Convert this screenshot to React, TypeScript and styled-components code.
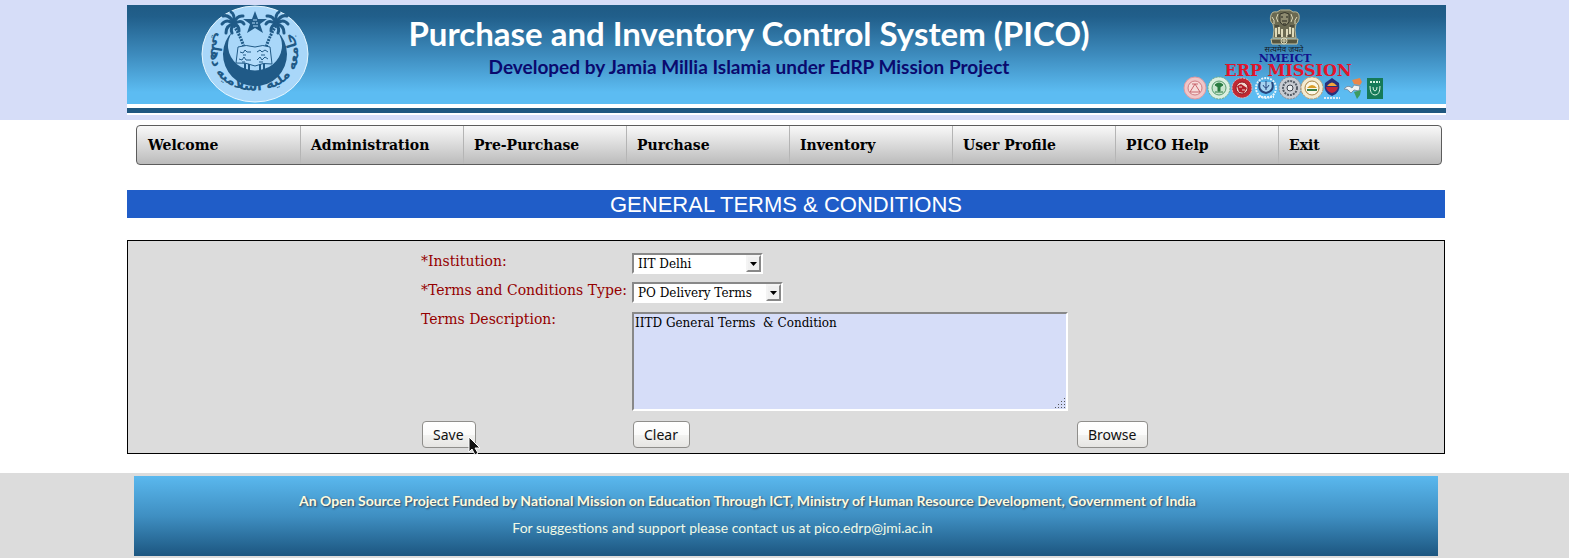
import React from "react";
import styled, { createGlobalStyle } from "styled-components";

const serif = `"DejaVu Serif", "Liberation Serif", serif`;
const banner = `Lato, "Open Sans", sans-serif`;

const GlobalStyle = createGlobalStyle`
  *, *::before, *::after { box-sizing: border-box; }
  body { margin: 0; background: #fff; font-family: ${serif}; color: #000; }
  h1, h2, p, ul { margin: 0; padding: 0; }
`;

const HeaderBand = styled.header`
  padding: 5px 123px 5px 127px;
  background: #d6ddf8;
`;

const Banner = styled.div`
  display: flex;
  align-items: flex-start;
  height: 99px;
  padding: 0 61px 0 74px;
  background: linear-gradient(#1f5a85 0%, #215f8b 12%, #3d8bbd 50%, #5cbcf2 88%, #5cbcf2 100%);
`;

const BannerRule = styled.div`
  height: 11px;
  border: solid #fff;
  border-width: 4px 0 2px;
  background: #1f5880;
`;

const BannerText = styled.div`
  flex: 1;
  padding: 8px 0 0 6px;
  text-align: center;
  font-family: ${banner};
  font-weight: 700;
  white-space: nowrap;
`;

const SystemName = styled.h1`
  font-size: 33px;
  line-height: 40px;
  color: #fff;
`;

const Developer = styled.p`
  font-size: 19px;
  line-height: 28px;
  color: #0a0a6e;
`;

const Content = styled.main`
  padding: 5px 124px 19px 127px;
`;

const MenuBar = styled.nav`
  margin: 0 3px 0 9px;
  border: 1px solid #5c5c5c;
  border-radius: 4px;
  background: linear-gradient(#f9f9f9, #bbb);
  overflow: hidden;
`;

const MenuList = styled.ul`
  display: grid;
  grid-template-columns: repeat(8, 1fr);
  list-style: none;
`;

const MenuItem = styled.li`
  border-left: 1px solid transparent;

  & + & {
    border-image: linear-gradient(#b4b4b4, #b4b4b4 70%, #bbb) 1;
  }
`;

const MenuLink = styled.a`
  display: block;
  padding: 0 10px;
  font-size: 14px;
  font-weight: 700;
  line-height: 38px;
  color: #000;
  text-decoration: none;
  white-space: nowrap;
`;

const PageTitle = styled.h2`
  margin: 25px 0 22px;
  padding-top: 1px;
  background: #205dc8;
  color: #fff;
  font: 400 22px/27px "Liberation Sans", Arial, sans-serif;
  text-align: center;
`;

const TermsForm = styled.form`
  display: grid;
  grid-template-columns: 211px 444px 73px;
  justify-content: center;
  row-gap: 8px;
  padding: 12px 2px 5px 0;
  border: 1px solid #000;
  background: #dcdcdc;
`;

const Label = styled.label`
  grid-column: 1;
  font-size: 14px;
  line-height: 16px;
  color: #950000;
  white-space: nowrap;
`;

const SelectBox = styled.div<{ $width: number }>`
  position: relative;
  grid-column: 2;
  width: ${(p) => p.$width}px;
  height: 21px;
`;

const Select = styled.select`
  appearance: none;
  display: block;
  width: 100%;
  height: 21px;
  padding: 1px 20px 0 4px;
  border: 2px solid;
  border-color: #888 #fff #fff #888;
  border-radius: 0;
  background: #fff;
  color: #000;
  font: 12px/16px ${serif};
`;

const ArrowBox = styled.span`
  position: absolute;
  top: 2px;
  right: 2px;
  display: flex;
  align-items: center;
  justify-content: center;
  width: 15px;
  height: 17px;
  border: 2px solid;
  border-color: #f4f4f4 #888 #888 #f4f4f4;
  background: #f0f0f0;
  pointer-events: none;
`;

const AreaBox = styled.div`
  position: relative;
  grid-column: 2;
  width: 436px;
  padding-top: 1px;
`;

const TextArea = styled.textarea`
  display: block;
  width: 100%;
  height: 99px;
  padding: 1px;
  border: 2px solid;
  border-color: #888 #fff #fff #888;
  border-radius: 0;
  background: #d6ddf8;
  color: #000;
  font: 12px/16px ${serif};
  resize: none;
`;

const Grip = styled.svg`
  position: absolute;
  right: 2px;
  bottom: 2px;
  pointer-events: none;
`;

const ButtonCell = styled.div<{ $column: number }>`
  position: relative;
  grid-column: ${(p) => p.$column};
  justify-self: start;
  padding: 2px 1px 0;
`;

const Button = styled.button`
  height: 27px;
  padding: 0 11px 0 10px;
  border: 1px solid #8f8e8b;
  border-radius: 4px;
  background: linear-gradient(#fff, #fbfbfa 50%, #f3f3f1 51%, #e6e5e3);
  color: #111;
  font: 14px/24px "Noto Sans", "Open Sans", sans-serif;
`;

const Pointer = styled.svg`
  position: absolute;
  left: 47px;
  top: 17px;
`;

const FooterBand = styled.footer`
  padding: 3px 131px 2px 134px;
  background: #dcdcdc;
`;

const FooterPanel = styled.div`
  height: 80px;
  padding: 11px 77px 0 0;
  background: linear-gradient(#5ab8ee, #3f8fc2 50%, #1c5680);
  font-family: ${banner};
  text-align: center;
  white-space: nowrap;
`;

const Funding = styled.p`
  font-size: 14px;
  font-weight: 700;
  line-height: 27px;
  color: #fdfbe0;
  text-shadow: 1px 1px 2px #333c50;
`;

const Support = styled.p`
  padding-right: 50px;
  font-size: 14px;
  line-height: 27px;
  color: #f1fae6;
`;

const Palm = ({ flip }: { flip?: boolean }) => (
  <g transform={flip ? "translate(108 0) scale(-1 1)" : undefined} fill="none" stroke="#205a87">
    <path d="M33 21 Q39 30 43 42" strokeWidth="3" strokeDasharray="2 1" />
    <g strokeWidth="3" strokeLinecap="round">
      <path d="M33 19 Q26 13 21 19" />
      <path d="M33 19 Q25 20 25 28" />
      <path d="M33 18 Q28 9 22 11" />
      <path d="M33 18 Q34 9 30 7" />
      <path d="M33 18 Q36 10 42 11" />
      <path d="M33 19 Q40 14 43 19" />
      <path d="M33 19 Q38 20 38 26" />
      <path d="M33 19 Q29 23 31 28" />
    </g>
  </g>
);

const JamiaEmblem = () => (
  <svg width="108" height="98" viewBox="0 0 108 98" role="img" aria-label="Jamia Millia Islamia emblem">
    <ellipse cx="54" cy="49" rx="53" ry="48" fill="#a9d7f9" stroke="#e6f7ff" strokeWidth="1" />
    <path d="M32 26 A32 32 0 1 0 76 26 A27 25 0 1 1 32 26 Z" fill="#205a87" />
    <Palm />
    <Palm flip />
    <path d="M54 6 L57 14 L66 14 L59 19 L62 28 L54 23 L46 28 L49 19 L42 14 L51 14 Z" fill="#205a87" />
    <path d="M52 15 h4 M51 18 h3 M55 18 h2 M52 21 h5" stroke="#b3dcfb" />
    <path d="M44 58 v11 M48 58 v11 M59 58 v11 M63 58 v11" stroke="#205a87" strokeWidth="2" />
    <path
      d="M37 42 Q45 39 54 42 Q62 39 69 42 L71 59 Q62 57 54 61 Q45 57 35 58 Z"
      fill="#b3dcfb"
      stroke="#205a87"
      strokeWidth="1"
    />
    <path
      d="M39 47 l3 1 l2 -3 l2 2 l4 0 M56 47 l3 -2 l2 2 l3 -2 l3 2 M42 50 h3 M60 50 h4 M38 54 l3 1 l2 -3 l2 3 l5 0 M56 55 l3 -3 l2 3 l3 -3 l3 2 M41 57 h3 M58 57 h4"
      stroke="#205a87"
      fill="none"
      strokeWidth="1"
    />
    <path id="emblem-baseline" d="M16 28 C7 44 8 60 19 72 C36 90 72 90 88 72 C99 60 100 44 91 28" fill="none" />
    <text fontFamily="DejaVu Sans, sans-serif" fontSize="14" fontWeight="700" fill="#205a87" textAnchor="middle">
      <textPath href="#emblem-baseline" startOffset="50%">
        جامعه مليه اسلاميه دهلي
      </textPath>
    </text>
  </svg>
);

const MissionMark = () => (
  <svg width="202" height="98" viewBox="0 0 202 98" role="img" aria-label="NMEICT ERP Mission">
    <path
      d="M88 10 Q89 6 94 7 Q97 4 102 5 Q108 4 110 7 Q115 6 116 10 Q117 16 113 19 L112 25 L113 33 H90 L91 25 L90 19 Q86 16 88 10 Z"
      fill="#6b6a52"
      stroke="#b9b798"
    />
    <path d="M88 34 H115 L114 39 H89 Z" fill="#55553f" stroke="#c9c6a4" />
    <g fill="none" stroke="#dedabb" strokeWidth="1">
      <path d="M89 12 q3 3 2 7 M114 12 q-3 3 -2 7 M95 9 q-3 4 0 8 M108 9 q3 4 0 8" />
      <path d="M93 23 v9 M96 22 v7 M99 24 v8 M104 24 v8 M107 22 v7 M110 23 v9" strokeWidth="2" />
      <circle cx="101" cy="36" r="3" />
      <path d="M101 34 v4 M99 36 h4" />
    </g>
    <path d="M97 9 q5 -3 9 0 v8 q-4 7 -9 0 Z" fill="#8e8b70" stroke="#34342a" />
    <path d="M98 12 h2 M103 12 h2 M99 16 h5 M100 19 h3" stroke="#22221a" />
    <path d="M94 31 h4 M104 31 h4 M92 21 h4 M107 21 h4" stroke="#30302a" />
    <text x="101" y="47" fontFamily="Noto Sans, sans-serif" fontSize="8" textAnchor="middle" fill="#141c28">
      सत्यमेव जयते
    </text>
    <g fontFamily="DejaVu Serif, serif" fontWeight="700" textAnchor="middle">
      <text x="102" y="57" fontSize="11" fill="#12128c">NMEICT</text>
      <text x="105" y="71" fontSize="16" fill="#e3142a">ERP MISSION</text>
    </g>
    <g strokeWidth="1">
      <circle cx="12" cy="83" r="11" fill="#f0c6c8" stroke="#e0999f" />
      <circle cx="12" cy="83" r="7" fill="#f6dcda" stroke="#cf7d84" />
      <path d="M7 87 l5 -8 l5 8 Z M9 79 h6" fill="none" stroke="#c8646c" />
      <circle cx="36" cy="83" r="11" fill="#dcefe0" stroke="#6dab84" strokeDasharray="2 1" />
      <circle cx="36" cy="83" r="7" fill="#c9e6cf" stroke="#559a6c" />
      <path d="M32 80 q4 -4 8 0 l-3 2 v4 h-2 v-4 Z M32 87 h8" fill="#287a40" stroke="#287a40" />
      <circle cx="59" cy="83" r="10" fill="#c22832" stroke="#ebb4b0" strokeDasharray="2 1" />
      <circle cx="59" cy="83" r="6" fill="#f3d8d0" stroke="#8c1620" />
      <path d="M54 81 l4 -2 l6 4 l-3 5 l-5 -1 Z" fill="#b31e28" />
      <path d="M56 82 h3 M59 85 h3" stroke="#f3d8d0" />
      <circle cx="83" cy="83" r="10" fill="none" stroke="#e6f3fa" strokeWidth="2" strokeDasharray="2 1" />
      <path d="M77 77 q-3 9 6 11 q9 -2 6 -11" fill="#a6d3f0" stroke="#27457c" strokeWidth="2" />
      <path d="M83 76 v9 M80 80 q3 6 6 0" fill="none" stroke="#27457c" />
      <path d="M75 92 h16" stroke="#e6f3fa" strokeWidth="2" strokeDasharray="2 1" />
      <circle cx="107" cy="83" r="11" fill="#c9ccd2" stroke="#868a92" strokeDasharray="2 1" />
      <circle cx="107" cy="83" r="7" fill="none" stroke="#555c66" strokeWidth="2" strokeDasharray="2 1" />
      <circle cx="107" cy="83" r="3" fill="#eceef0" stroke="#3c424c" />
      <circle cx="129" cy="83" r="11" fill="#f3ead0" stroke="#b39a72" strokeDasharray="3 1" />
      <circle cx="129" cy="83" r="7" fill="#fbf7e6" stroke="#a87f3c" />
      <path d="M124 83 q5 -6 10 0 Z" fill="#d99d28" />
      <path d="M124 85 h10" stroke="#3b8048" strokeWidth="2" />
      <path d="M149 73 L156 78 Q158 88 149 91 Q140 88 142 78 Z" fill="#28307c" />
      <path d="M144 81 q5 -7 10 0 Z" fill="#f4a63c" />
      <path d="M143 82 h12 q-1 5 -6 6 q-5 -1 -6 -6 Z" fill="#c22438" />
      <path d="M141 93 h16" stroke="#dceaf4" strokeWidth="2" strokeDasharray="2 1" />
      <path d="M169 75 l8 -2 l2 4 l-2 3 l-6 -1 Z" fill="#e9874a" />
      <path d="M161 84 q4 -5 8 -1 l2 -3 l6 1 l-1 5 l-5 -1 l-3 3 q-4 -5 -7 -4 Z" fill="#eef2f4" stroke="#7c93a6" />
      <path d="M171 87 l7 -2 l-1 5 l-3 4 Z" fill="#3d9a60" />
      <rect x="184" y="73" width="16" height="21" fill="#157a58" />
      <path d="M187 81 q0 9 5 9 q5 0 5 -9 M190 82 q0 4 2 4 q2 0 2 -4" fill="none" stroke="#d5f2e0" strokeWidth="1" />
      <path d="M187 77 h10" stroke="#d5f2e0" strokeWidth="2" strokeDasharray="2 1" />
    </g>
  </svg>
);

const DropArrow = () => (
  <ArrowBox aria-hidden="true">
    <svg width="7" height="4" viewBox="0 0 7 4">
      <path d="M0 0 H7 L3.5 4 Z" fill="#000" />
    </svg>
  </ArrowBox>
);

const gripDots = [
  [9, 0],
  [9, 3], [6, 3],
  [9, 6], [6, 6], [3, 6],
  [9, 9], [6, 9], [3, 9], [0, 9],
];

const menu = ["Welcome", "Administration", "Pre-Purchase", "Purchase", "Inventory", "User Profile", "PICO Help", "Exit"];

export default function App() {
  return (
    <>
      <GlobalStyle />
      <HeaderBand>
        <Banner>
          <JamiaEmblem />
          <BannerText>
            <SystemName>Purchase and Inventory Control System (PICO)</SystemName>
            <Developer>Developed by Jamia Millia Islamia under EdRP Mission Project</Developer>
          </BannerText>
          <MissionMark />
        </Banner>
        <BannerRule />
      </HeaderBand>
      <Content>
        <MenuBar aria-label="Main">
          <MenuList>
            {menu.map((item) => (
              <MenuItem key={item}>
                <MenuLink href="#">{item}</MenuLink>
              </MenuItem>
            ))}
          </MenuList>
        </MenuBar>
        <PageTitle>GENERAL TERMS &amp; CONDITIONS</PageTitle>
        <TermsForm onSubmit={(e) => e.preventDefault()}>
          <Label htmlFor="institution">*Institution:</Label>
          <SelectBox $width={131}>
            <Select id="institution">
              <option>IIT Delhi</option>
            </Select>
            <DropArrow />
          </SelectBox>
          <Label htmlFor="terms-type">*Terms and Conditions Type:</Label>
          <SelectBox $width={151}>
            <Select id="terms-type">
              <option>PO Delivery Terms</option>
            </Select>
            <DropArrow />
          </SelectBox>
          <Label htmlFor="description">Terms Description:</Label>
          <AreaBox>
            <TextArea id="description" spellCheck={false} defaultValue="IITD General Terms  & Condition" />
            <Grip width="11" height="11" viewBox="0 0 11 11" aria-hidden="true">
              {gripDots.map(([x, y]) => (
                <rect key={`${x}-${y}`} x={x} y={y} width="1" height="1" fill="#555" />
              ))}
            </Grip>
          </AreaBox>
          <ButtonCell $column={1}>
            <Button type="submit">Save</Button>
            <Pointer width="13" height="20" viewBox="0 0 13 20" aria-hidden="true">
              <path d="M1 1 V16 L4 13 L7 19 L10 17 L7 12 H12 Z" fill="#111" stroke="#fff" strokeWidth="1" />
            </Pointer>
          </ButtonCell>
          <ButtonCell $column={2}>
            <Button type="reset">Clear</Button>
          </ButtonCell>
          <ButtonCell $column={3}>
            <Button type="button">Browse</Button>
          </ButtonCell>
        </TermsForm>
      </Content>
      <FooterBand>
        <FooterPanel>
          <Funding>
            An Open Source Project Funded by National Mission on Education Through ICT, Ministry of Human Resource
            Development, Government of India
          </Funding>
          <Support>For suggestions and support please contact us at pico.edrp@jmi.ac.in</Support>
        </FooterPanel>
      </FooterBand>
    </>
  );
}
